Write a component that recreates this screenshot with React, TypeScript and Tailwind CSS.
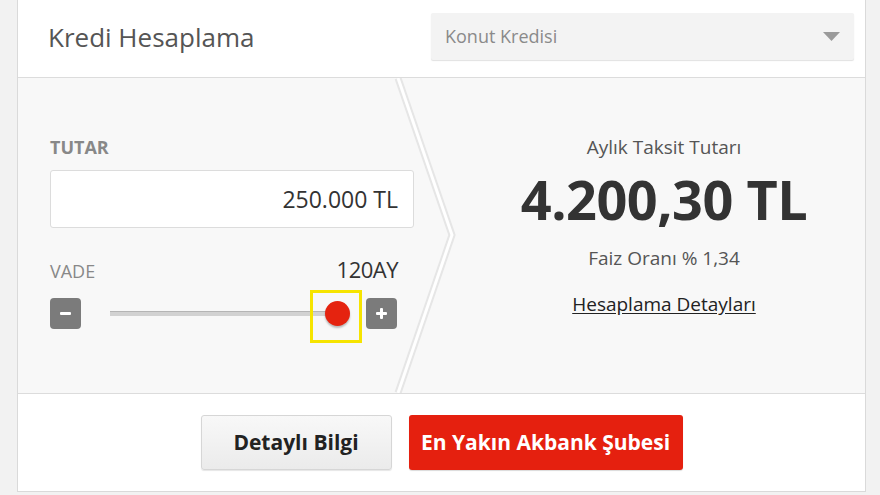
import React from 'react'

const font = { fontFamily: '"Open Sans", "Liberation Sans", sans-serif' }

function Chevron() {
  // light separator arrow between the input and result columns
  return (
    <svg className="absolute left-[376px] top-0" width="64" height="315" viewBox="0 0 64 315">
      <polyline points="4,0 58,157 4,315" fill="none" stroke="#e6e6e6" strokeWidth="7" />
      <polyline points="4,0 58,157 4,315" fill="none" stroke="#ffffff" strokeWidth="3" />
    </svg>
  )
}

function Slider() {
  return (
    <div className="flex h-[31px] w-[347px] items-center">
      <button className="flex h-[31px] w-[31px] items-center justify-center rounded-[4px] bg-[#7b7b7b]">
        <span className="block h-[3px] w-[11px] rounded-[1px] bg-white" />
      </button>
      <div className="relative h-full flex-1">
        <div className="absolute left-[29px] top-[13px] h-[5px] w-[230px] border-t border-[#b5b5b5] bg-[#d2d2d2]" />
        <div className="absolute left-[229px] top-[-8px] h-[53px] w-[52px] border-[3px] border-[#f6e400]" />
        <div className="absolute left-[244px] top-[3px] h-[25px] w-[25px] rounded-full bg-[#e5230f] shadow-[0_2px_2px_rgba(0,0,0,0.25)]" />
      </div>
      <button className="relative flex h-[31px] w-[31px] items-center justify-center rounded-[4px] bg-[#7b7b7b]">
        <span className="absolute h-[3px] w-[11px] rounded-[1px] bg-white" />
        <span className="absolute h-[11px] w-[3px] rounded-[1px] bg-white" />
      </button>
    </div>
  )
}

export default function App() {
  return (
    <div className="h-[495px] w-[880px] overflow-hidden bg-[#f2f2f2]" style={font}>
      <div className="ml-[17px] h-[492px] w-[849px] border-x border-b border-[#dadada] bg-white">
        {/* başlık */}
        <div className="flex h-[78px] items-start justify-between border-b border-[#dcdcdc] pl-[30px] pr-[11px]">
          <h1 className="mt-[19px] text-[26px] leading-[36px] text-[#555]">Kredi Hesaplama</h1>
          <div className="mt-[13px] flex h-[47px] w-[423px] items-center justify-between rounded-[2px] bg-[#f3f3f3] pl-[14px] pr-[14px] shadow-[0_1px_1px_rgba(0,0,0,0.12)]">
            <span className="text-[18px] text-[#8a8a8a]">Konut Kredisi</span>
            <svg width="17" height="9" viewBox="0 0 17 9">
              <polygon points="0,0 17,0 8.5,9" fill="#9a9a9a" />
            </svg>
          </div>
        </div>

        {/* hesaplama alanı */}
        <div className="relative flex h-[316px] border-b border-[#dcdcdc] bg-[#f8f8f8]">
          <Chevron />
          <div className="w-[435px] pl-[32px] pt-[57px]">
            <div className="text-[18px] font-bold leading-6 text-[#888]">TUTAR</div>
            <div className="mt-[11px] flex h-[58px] w-[364px] items-center justify-end rounded-[3px] border border-[#dcdcdc] bg-white pr-[15px]">
              <span className="text-[23px] text-[#333]">250.000 TL</span>
            </div>
            <div className="mt-[27px] flex w-[348px] items-baseline justify-between">
              <span className="text-[18px] leading-6 text-[#888]">VADE</span>
              <span className="text-[22px] leading-7 tracking-[-0.5px] text-[#333]">120AY</span>
            </div>
            <div className="mt-[15px]">
              <Slider />
            </div>
          </div>
          <div className="flex flex-1 flex-col items-center pl-[10px] pt-[57px]">
            <div className="text-[19px] leading-6 text-[#555]">Aylık Taksit Tutarı</div>
            <div className="mt-[13px] text-[54px] font-bold leading-none tracking-[-0.5px] text-[#333]">4.200,30 TL</div>
            <div className="mt-[20px] text-[19px] leading-6 text-[#555]">Faiz Oranı % 1,34</div>
            <a className="mt-[22px] text-[19px] leading-6 text-[#222] underline underline-offset-2">Hesaplama Detayları</a>
          </div>
        </div>

        {/* butonlar */}
        <div className="flex h-[97px] items-center justify-center gap-[17px]">
          <button className="h-[55px] w-[191px] rounded-[3px] border border-[#d6d6d6] bg-gradient-to-b from-[#f8f8f8] to-[#ebebeb] text-[21px] font-bold text-[#222] shadow-[0_1px_1px_rgba(0,0,0,0.1)]">
            Detaylı Bilgi
          </button>
          <button className="h-[55px] w-[274px] rounded-[3px] bg-[#e5200f] text-[21px] font-bold text-white shadow-[0_1px_1px_rgba(0,0,0,0.15)]">
            En Yakın Akbank Şubesi
          </button>
        </div>
      </div>
    </div>
  )
}
